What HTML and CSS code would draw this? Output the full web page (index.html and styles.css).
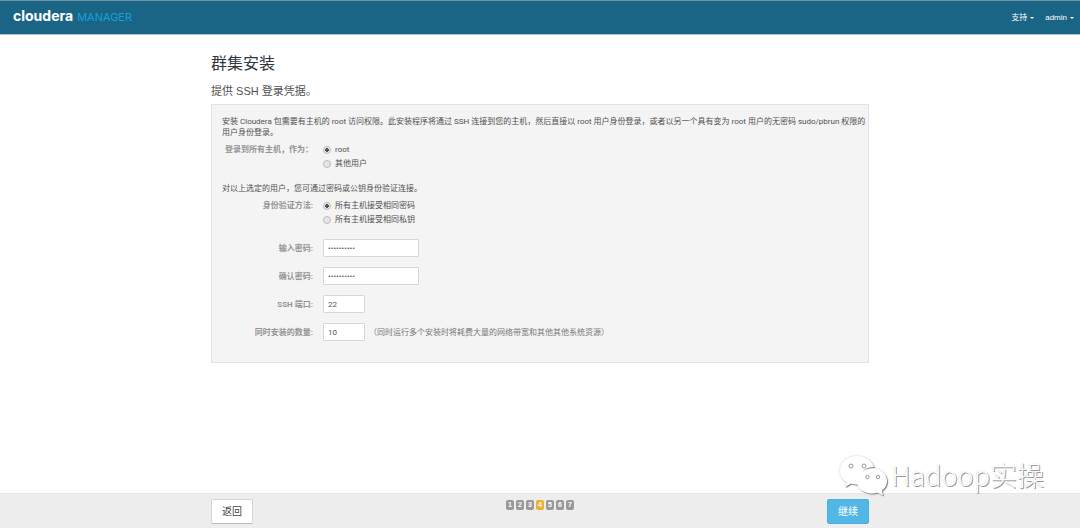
FILE: index.html
```html
<!DOCTYPE html>
<html lang="zh-CN">
<head>
<meta charset="utf-8">
<meta name="viewport" content="width=device-width, initial-scale=1">
<title>群集安装 - Cloudera Manager</title>
<link rel="stylesheet" href="styles.css">
</head>
<body>
<header class="topbar">
  <div class="brand"><span class="brand-name">cloudera</span><span class="brand-product">MANAGER</span></div>
  <nav class="menu">
    <button class="menu-item" type="button">支持<span class="caret"></span></button>
    <button class="menu-item" type="button">admin<span class="caret"></span></button>
  </nav>
</header>

<main class="container content">
  <h1 class="title">群集安装</h1>
  <h2 class="subtitle">提供 SSH 登录凭据。</h2>
  <form class="panel" id="credentials">
    <p class="text">安装 Cloudera 包需要有主机的 root 访问权限。此安装程序将通过 SSH 连接到您的主机，然后直接以 root 用户身份登录，或者以另一个具有变为 root 用户的无密码 sudo/pbrun 权限的用户身份登录。</p>
    <div class="row choices" role="radiogroup" aria-labelledby="user-label">
      <span class="label" id="user-label">登录到所有主机，作为：</span>
      <div class="options">
        <label class="option"><input class="radio" type="radio" name="user" checked>root</label>
        <label class="option"><input class="radio" type="radio" name="user">其他用户</label>
      </div>
    </div>
    <p class="text">对以上选定的用户，您可通过密码或公钥身份验证连接。</p>
    <div class="row choices" role="radiogroup" aria-labelledby="auth-label">
      <span class="label" id="auth-label">身份验证方法:</span>
      <div class="options">
        <label class="option"><input class="radio" type="radio" name="auth" checked>所有主机接受相同密码</label>
        <label class="option"><input class="radio" type="radio" name="auth">所有主机接受相同私钥</label>
      </div>
    </div>
    <div class="fields">
      <div class="row"><label class="label" for="password">输入密码:</label><input class="input secret" id="password" type="password" value="cloudera10"></div>
      <div class="row"><label class="label" for="confirm">确认密码:</label><input class="input secret" id="confirm" type="password" value="cloudera10"></div>
      <div class="row"><label class="label" for="port">SSH 端口:</label><input class="input short" id="port" type="text" value="22"></div>
      <div class="row"><label class="label" for="parallel">同时安装的数量:</label><div class="with-hint"><input class="input short" id="parallel" type="text" value="10"><span class="hint">（同时运行多个安装时将耗费大量的网络带宽和其他其他系统资源）</span></div></div>
    </div>
  </form>
</main>

<footer class="footer">
  <div class="container actions">
    <button class="button" type="button">返回</button>
    <ol class="steps">
      <li class="step">1</li><li class="step">2</li><li class="step">3</li><li class="step current">4</li><li class="step">5</li><li class="step">6</li><li class="step">7</li>
    </ol>
    <button class="button primary" type="submit" form="credentials">继续</button>
  </div>
</footer>

<div class="watermark">
  <svg class="watermark-icon" viewBox="0 0 50 44" aria-hidden="true">
    <path d="M18 3C8 3 1 9.500 1 18c0 5 2.500 9 6.500 11.500L6 34l6-3.500c2 .6 4 1 7 1C18 20 26 14 35 14 33 8 26 3 18 3z"/>
    <path d="M33 15.500c-8.500 0-15 5.500-15 12.500s6.500 12.500 15 12.500c2 0 4-.3 5.500-.9L44 42.500l-1.300-5C46 35.300 48 32 48 28c0-7-6.500-12.500-15-12.500z"/>
    <g class="eyes"><circle cx="12" cy="13" r="2"/><circle cx="25" cy="13" r="2"/><circle cx="28.500" cy="24" r="1.700"/><circle cx="39" cy="24" r="1.700"/></g>
  </svg>
  <span class="watermark-text">Hadoop实操</span>
</div>
</body>
</html>
```
FILE: styles.css
```css
* { box-sizing: border-box; }

body {
  margin: 0;
  min-height: 100vh;
  display: flex;
  flex-direction: column;
  background: #fff;
  color: #505050;
  font-family: "Liberation Sans", "Noto Sans CJK SC", sans-serif;
  font-size: 8px;
  line-height: 11px;
}

button, input { font: inherit; }

.topbar {
  display: flex;
  align-items: center;
  justify-content: space-between;
  height: 35px;
  padding: 0 6px 0 13px;
  background: #1a6585;
  border-top: 1px solid #6f93a3;
  border-bottom: 1px solid #a9c6d2;
}

.brand {
  display: flex;
  align-items: baseline;
  gap: 4px;
  padding-bottom: 2px;
  line-height: 16px;
}

.brand-name {
  color: #fff;
  font-family: Inter, sans-serif;
  font-size: 14px;
  font-weight: 700;
}

.brand-product {
  color: #14a0dc;
  font-family: Inter, sans-serif;
  font-size: 11px;
}

.menu { display: flex; gap: 11px; }

.menu-item {
  display: flex;
  align-items: center;
  gap: 3px;
  padding: 0;
  border: 0;
  background: none;
  color: #fff;
}

.caret {
  border: 2px solid transparent;
  border-top-color: #fff;
  border-bottom: 0;
}

.container {
  width: 100%;
  max-width: 658px;
  margin: 0 auto;
}

.content { flex: 1; padding: 19px 0 20px; }

.title {
  margin: 0 0 10px;
  color: #30383f;
  font-size: 16px;
  font-weight: 400;
  line-height: 20px;
}

.subtitle {
  margin: 0 0 5px;
  font-size: 11px;
  font-weight: 400;
  line-height: 15px;
}

.panel {
  padding: 11px 2px 21px 10px;
  background: #f4f4f4;
  border: 1px solid #e2e2e2;
  font-family: Roboto, "Noto Sans CJK SC", sans-serif;
}

.text { margin: 0; }

.row {
  display: grid;
  grid-template-columns: 91px 1fr;
  column-gap: 10px;
  align-items: center;
}

.choices { align-items: start; padding: 5px 0 12px; line-height: 14px; }

.label { color: #959595; font-weight: 700; text-align: right; }

.option { display: flex; align-items: center; gap: 4px; }

.radio {
  appearance: none;
  width: 8px;
  height: 8px;
  margin: 0;
  border: 1px solid #bbb;
  border-radius: 50%;
  background: #e6e6e6;
}

.radio:checked {
  background: radial-gradient(circle, #555 0 2px, #e6e6e6 2px);
}

.fields { display: grid; gap: 10px; }

.input {
  width: 96px;
  height: 18px;
  padding: 0 4px;
  border: 1px solid #d6d6d6;
  border-radius: 1px;
  background: #fff;
  color: #555;
}

.short { width: 42px; }

.with-hint { display: flex; align-items: center; gap: 4px; }

.hint { color: #777; }

.footer {
  min-height: 35px;
  padding: 5px 0 4px;
  background: #ededed;
  border-top: 1px solid #e8e8e8;
}

.actions { display: flex; justify-content: space-between; }

.button {
  width: 42px;
  height: 25px;
  padding: 0;
  border: 1px solid #d5d5d5;
  border-bottom-color: #bbb;
  border-radius: 2px;
  background: #fff;
  color: #444;
  font-size: 10px;
}

.primary { background: #52b7e6; border-color: #4aafde; color: #fff; }

.steps {
  display: flex;
  gap: 2px;
  margin: 1px 0 0;
  padding: 0;
  list-style: none;
}

.step {
  width: 8px;
  height: 10px;
  border-radius: 2px;
  background: #999;
  color: #fff;
  font-size: 7px;
  font-weight: 700;
  line-height: 10px;
  text-align: center;
}

.current { background: #ecb034; }

.watermark {
  position: absolute;
  right: 36px;
  bottom: 31px;
  display: flex;
  align-items: center;
  gap: 2px;
  pointer-events: none;
}

.watermark-icon {
  width: 50px;
  height: 44px;
  fill: #fff;
  filter: drop-shadow(1px 1px 0 #8c8c8c) drop-shadow(0 0 1px #ccc);
}

.eyes { fill: #fff; stroke: #999; stroke-width: 1; }

.watermark-text {
  color: #fff;
  font-family: "Noto Sans CJK SC", sans-serif;
  font-size: 27px;
  font-weight: 300;
  line-height: 40px;
  text-shadow: 1px 1px 0 #999, 0 0 1px #ccc;
}
```
